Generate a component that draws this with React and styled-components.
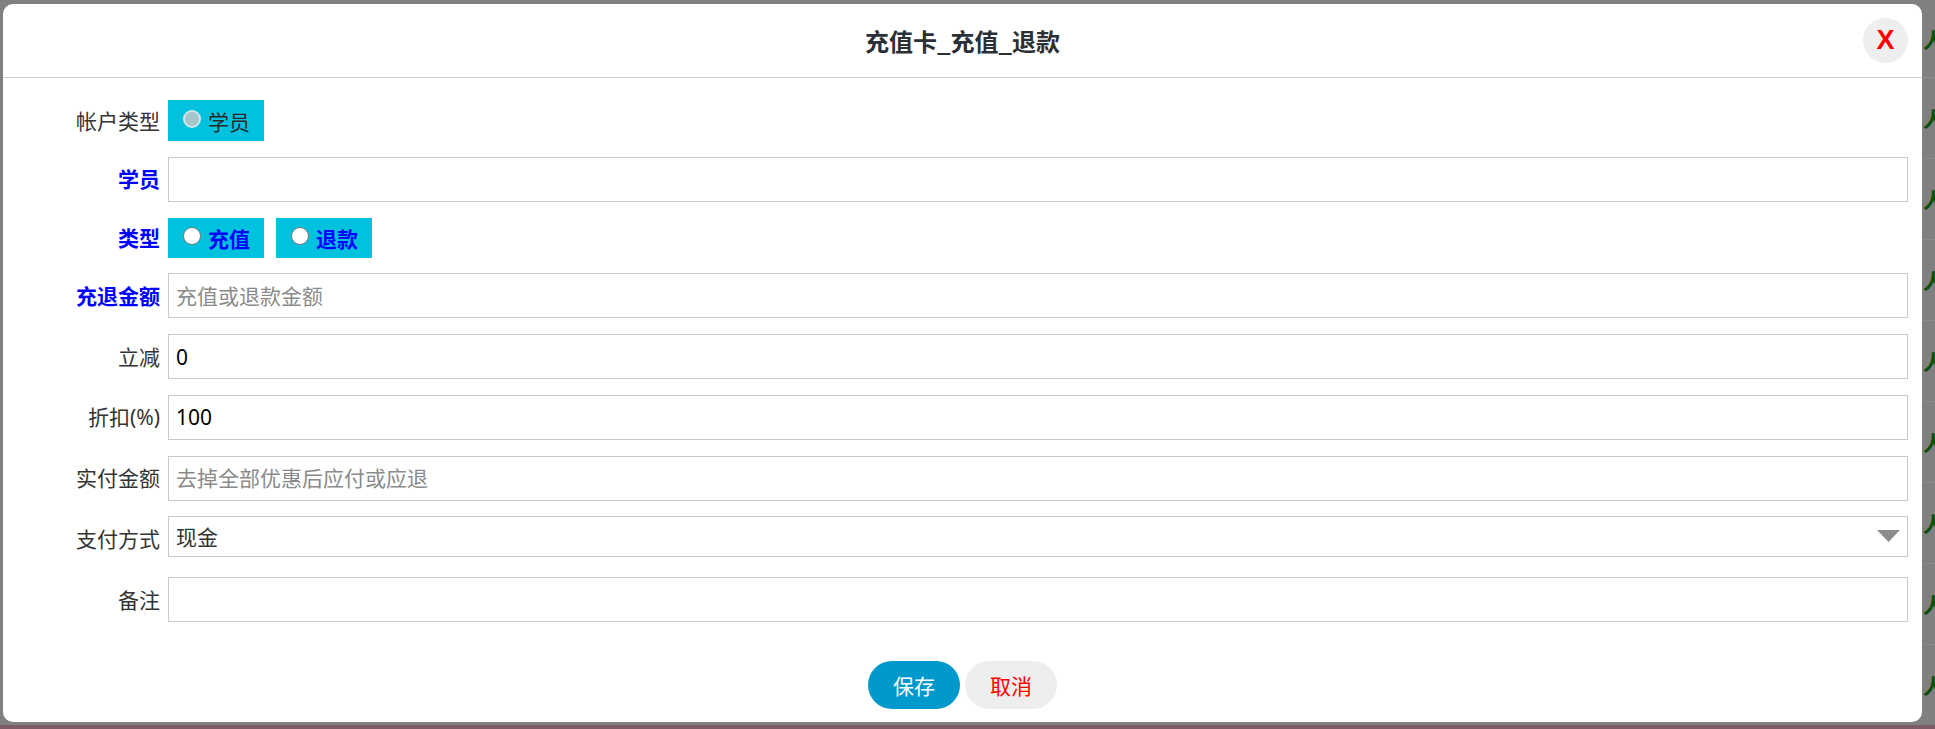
import React from 'react'
import styled, { createGlobalStyle } from 'styled-components'

const GlobalStyle = createGlobalStyle`
  html, body {
    margin: 0;
    padding: 0;
    background: #808080;
    overflow: hidden;
  }
  * {
    box-sizing: border-box;
  }
`

const Page = styled.div`
  width: 1935px;
  height: 729px;
  display: flex;
  flex-direction: column;
  font-family: "Noto Sans", "Noto Sans CJK SC", sans-serif;
`

const Stage = styled.div`
  display: flex;
  flex-direction: row;
  height: 725px;
`

const DialogSlot = styled.div`
  padding: 4px 0 3px 3px;
`

// the page behind the modal, only its last column peeks out on the right
const SideTable = styled.div`
  flex: 1;
  overflow: hidden;
  display: flex;
  flex-direction: column;
`

const SideCell = styled.div`
  flex: none;
  height: ${props => props.h}px;
  border-bottom: 1px solid #8b8b8b;
  display: flex;
  align-items: center;
  padding-left: 1px;
  font-family: "Noto Sans CJK SC", sans-serif;
  font-size: 21px;
  font-weight: 700;
  color: #0a4f0a;
  white-space: nowrap;
`

const BottomStrip = styled.div`
  height: 4px;
  background: #7b5c64;
`

const Dialog = styled.div`
  width: 1919px;
  height: 718px;
  background: #fff;
  border-radius: 10px;
  display: flex;
  flex-direction: column;
`

const Header = styled.div`
  height: 74px;
  flex: none;
  border-bottom: 1px solid #cfcfcf;
  display: flex;
  align-items: center;
  justify-content: center;
  position: relative;
`

const Title = styled.div`
  font-size: 24px;
  font-weight: 700;
  color: #2b2f36;
  font-family: "Noto Sans CJK SC", sans-serif;
`

const CloseButton = styled.button`
  position: absolute;
  right: 14px;
  top: 14px;
  width: 45px;
  height: 45px;
  border-radius: 50%;
  border: none;
  background: #eeeeee;
  color: #ff0000;
  font-family: "Liberation Sans", Arial, sans-serif;
  font-weight: 700;
  font-size: 27px;
  line-height: 45px;
  padding: 0;
  cursor: pointer;
`

const Form = styled.div`
  display: grid;
  grid-template-columns: 157px 1fr;
  column-gap: 8px;
  row-gap: 15.75px;
  padding: 22px 14px 0 0;
`

const Label = styled.div`
  display: flex;
  align-items: center;
  justify-content: flex-end;
  font-size: 21px;
  white-space: nowrap;
  color: ${props => (props.required ? '#0000ff' : '#333')};
  font-weight: ${props => (props.required ? 700 : 400)};
  font-family: "Noto Sans", "Noto Sans CJK SC", sans-serif;
  padding-bottom: 2px;
`

const Field = styled.div`
  display: flex;
  align-items: ${props => (props.top ? 'flex-start' : 'center')};
  gap: 12px;
  height: ${props => props.h || 45}px;
  position: relative;
`

const TextInput = styled.input`
  width: 100%;
  height: 45px;
  border: 1px solid #c9c9c9;
  padding: 0 7px;
  font-size: 21px;
  font-family: "Noto Sans", "Noto Sans CJK SC", sans-serif;
  color: #000;
  outline: none;
  &::placeholder {
    color: #8a8a8a;
  }
`

const Select = styled.select`
  width: 100%;
  height: 41px;
  border: 1px solid #c9c9c9;
  border-radius: 0;
  background: #fff;
  padding: 0 7px;
  font-size: 21px;
  font-family: "Noto Sans", "Noto Sans CJK SC", sans-serif;
  color: #333;
  appearance: none;
  outline: none;
`

const SelectArrow = styled.svg`
  position: absolute;
  right: 8px;
  top: 14px;
  pointer-events: none;
`

const RadioBox = styled.label`
  display: inline-flex;
  align-items: center;
  height: ${props => props.h}px;
  width: 96px;
  padding-left: 15px;
  gap: 7px;
  background: #00c1de;
  font-size: 21px;
  font-family: "Noto Sans CJK SC", sans-serif;
  color: ${props => (props.required ? '#0000ff' : '#2a2a2a')};
  font-weight: ${props => (props.required ? 700 : 400)};
`

const RadioDot = styled.span`
  width: 18px;
  height: 18px;
  border-radius: 50%;
  flex: none;
  background: ${props => (props.disabled ? '#a6c6cb' : '#fff')};
  border: ${props => (props.disabled ? '2px solid #cfe6ea' : '1px solid #767676')};
  margin-top: -4px;
`

const Footer = styled.div`
  display: flex;
  justify-content: center;
  gap: 5px;
  margin-top: 39px;
`

const Button = styled.button`
  width: 92px;
  height: 48px;
  border: none;
  border-radius: 24px;
  font-size: 21px;
  font-family: "Noto Sans CJK SC", sans-serif;
  background: ${props => (props.primary ? '#0099cc' : '#eeeeee')};
  color: ${props => (props.primary ? '#fff' : '#ff0000')};
  cursor: pointer;
`

const sideHeights = [78, 81, 81, 81, 81, 81, 81, 81, 81, 81]

export default function App () {
  return (
    <Page>
      <GlobalStyle />
      <Stage>
        <DialogSlot>
          <Dialog>
            <Header>
              <Title>充值卡_充值_退款</Title>
              <CloseButton type="button">X</CloseButton>
            </Header>
            <Form>
              <Label>帐户类型</Label>
              <Field h={41}>
                <RadioBox h={41}><RadioDot disabled />学员</RadioBox>
              </Field>

              <Label required>学员</Label>
              <Field><TextInput type="text" /></Field>

              <Label required>类型</Label>
              <Field h={40}>
                <RadioBox h={40} required><RadioDot />充值</RadioBox>
                <RadioBox h={40} required><RadioDot />退款</RadioBox>
              </Field>

              <Label required>充退金额</Label>
              <Field><TextInput type="text" placeholder="充值或退款金额" /></Field>

              <Label>立减</Label>
              <Field><TextInput type="text" defaultValue="0" /></Field>

              <Label>折扣(%)</Label>
              <Field><TextInput type="text" defaultValue="100" /></Field>

              <Label>实付金额</Label>
              <Field><TextInput type="text" placeholder="去掉全部优惠后应付或应退" /></Field>

              <Label>支付方式</Label>
              <Field top>
                <Select defaultValue="cash">
                  <option value="cash">现金</option>
                  <option value="card">刷卡</option>
                </Select>
                <SelectArrow width="23" height="12" viewBox="0 0 23 12">
                  <path d="M0 0 L23 0 L11.5 12 Z" fill="#8c8c8c" />
                </SelectArrow>
              </Field>

              <Label>备注</Label>
              <Field><TextInput type="text" /></Field>
            </Form>
            <Footer>
              <Button primary type="button">保存</Button>
              <Button type="button">取消</Button>
            </Footer>
          </Dialog>
        </DialogSlot>
        <SideTable>
          {sideHeights.map((h, i) => (
            <SideCell key={i} h={h}>人</SideCell>
          ))}
        </SideTable>
      </Stage>
      <BottomStrip />
    </Page>
  )
}
